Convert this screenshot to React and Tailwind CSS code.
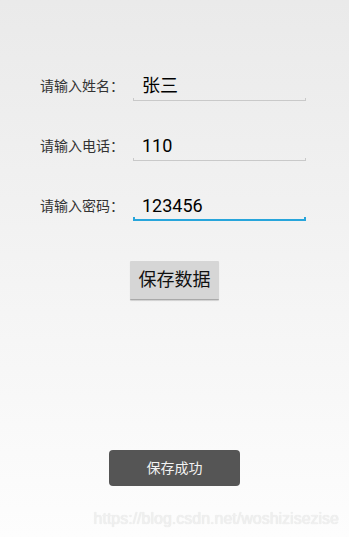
import React from "react";

function Field({ label, value, focused }) {
  return (
    <div className="flex items-center h-[32px] pl-[40px]">
      <div className="w-[93px] text-[14px] text-[#333333] leading-none">{label}</div>
      <div className="relative w-[173px] h-[32px] flex items-center pl-[9px] text-[18px] text-black leading-none">
        {value}
        {focused ? (
          <span className="absolute left-0 right-0 bottom-[1px] h-[4px] border-x-2 border-b-2 border-[#27a5db]" />
        ) : (
          <span className="absolute left-0 right-0 bottom-[1px] h-[3px] border-x border-b border-[#c9c9c9]" />
        )}
      </div>
    </div>
  );
}

export default function App() {
  return (
    <div className="relative h-[537px] w-full overflow-hidden bg-gradient-to-b from-[#eaeaea] to-[#fdfdfd] font-['Roboto','Noto_Sans_CJK_SC',sans-serif]">
      <div className="flex flex-col pt-[70px] gap-[28px]">
        <Field label="请输入姓名：" value="张三" />
        <Field label="请输入电话：" value="110" />
        <Field label="请输入密码：" value="123456" focused />
      </div>
      <div className="flex justify-center mt-[39px]">
        <button className="w-[89px] h-[39px] bg-[#d6d6d6] text-[18px] text-[#111111] leading-none border-b border-[#a9a9a9] shadow-[0_1px_1px_rgba(0,0,0,0.15)] rounded-[1px]">
          保存数据
        </button>
      </div>
      <div className="flex justify-center mt-[150px]">
        <div className="w-[131px] h-[36px] rounded-[4px] bg-[#555555] flex items-center justify-center text-[14px] text-[#f2f2f2] leading-none">
          保存成功
        </div>
      </div>
      <div className="absolute right-[10px] bottom-[8px] text-[16px] leading-[20px] text-[#f0f0f0] font-['Liberation_Sans',sans-serif] [text-shadow:0_0_1px_rgba(0,0,0,0.12)]">
        https://blog.csdn.net/woshizisezise
      </div>
    </div>
  );
}
